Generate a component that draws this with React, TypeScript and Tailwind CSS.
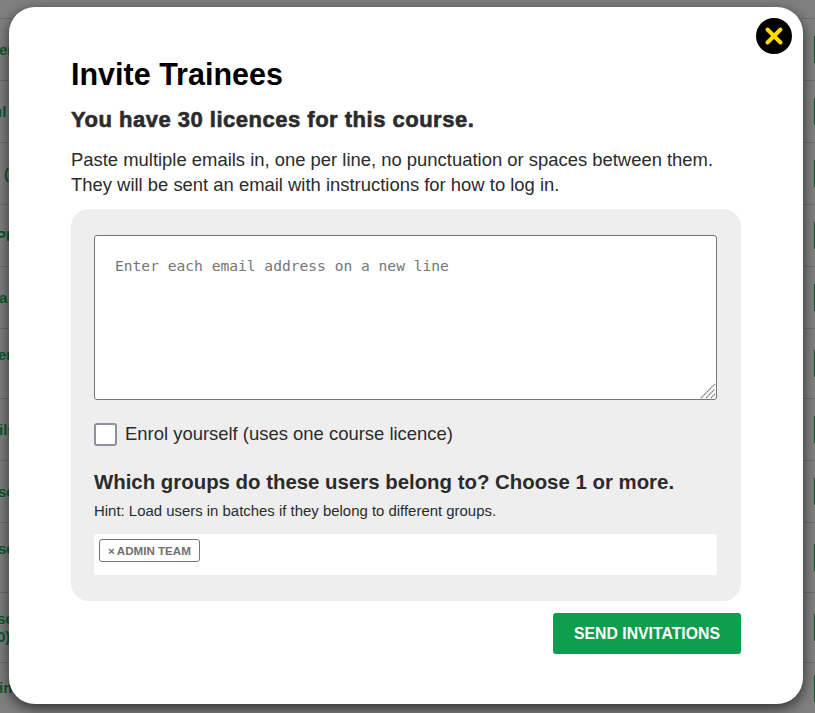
const rows = [
  { h: 62, t: ["er"], m: -1 }, { h: 62, t: ["ul"], m: -7 }, { h: 62, t: ["("], m: 4 }, { h: 62, t: ["PI"], m: -4 }, { h: 62, t: ["a"], m: -1 },
  { h: 70, t: ["en", "\u00a0"], m: -2 }, { h: 62, t: ["ils"], m: -1 }, { h: 62, t: ["se"], m: -2 }, { h: 70, t: ["se", "\u00a0"], m: -2 }, { h: 70, t: ["se", "0)"], m: -3 }, { h: 51, t: ["in"], m: -1 },
];

export default function App() {
  return (
    <div className="relative h-[713px] w-[815px] overflow-hidden bg-[#808080] font-['Liberation_Sans',Arial,sans-serif]">
      <div className="flex flex-col pt-[18px]">
        {rows.map((r, i) => (
          <div key={i} style={{ height: r.h }} className="flex items-center justify-between border-t border-[#6f6f6f]">
            <div style={{ marginLeft: r.m }} className="whitespace-nowrap text-[15px] font-bold leading-[18px] text-[#0a5a2a]">
              {r.t.map((l, j) => (
                <div key={j}>{l}</div>
              ))}
            </div>
            <span className="h-[27px] w-px bg-[#0a5a2a]" />
          </div>
        ))}
      </div>
      <div className="absolute left-[9px] top-[7px] flex h-[697px] w-[794px] flex-col rounded-[26px] bg-white px-[62px] pt-[49px] shadow-[0_4px_14px_rgba(0,0,0,0.65)]">
        <button className="absolute right-[11px] top-[11px] flex h-[36px] w-[36px] items-center justify-center rounded-full bg-black">
          <svg width="20" height="20" viewBox="0 0 20 20">
            <path d="M3.5 3.5 16.5 16.5M16.5 3.5 3.5 16.5" stroke="#ffdd00" strokeWidth="4" strokeLinecap="round" />
          </svg>
        </button>
        <h1 className="text-[30.5px] font-bold leading-[36px] text-black">Invite Trainees</h1>
        <h2 className="mt-[15px] text-[22px] font-bold leading-[26px] tracking-[0.5px] text-[#2b2b2b] [-webkit-text-stroke:0.6px_#2b2b2b]">You have 30 licences for this course.</h2>
        <p className="mt-[14px] text-[18.43px] leading-[25px] text-[#2b2b2b]">
          Paste multiple emails in, one per line, no punctuation or spaces between them.<br />
          They will be sent an email with instructions for how to log in.
        </p>
        <div className="mt-[12px] flex h-[392px] flex-col rounded-[18px] bg-[#eeeeee] pl-[23px] pr-[24px] pt-[26px]">
          <div className="relative h-[165px] w-full">
            <textarea
              readOnly
              placeholder="Enter each email address on a new line"
              className="block h-full w-full resize-none rounded-[3px] border border-[#767676] bg-white px-5 py-[21px] font-['DejaVu_Sans_Mono',monospace] text-[14.6px] leading-[18px] outline-none placeholder:text-[#757575]"
            />
            <svg className="absolute bottom-[1px] right-[1px]" width="16" height="16" viewBox="0 0 16 16">
              <path d="M1 15 15 1M6 15 15 6M11 15 15 11" stroke="#767676" strokeWidth="1.4" strokeDasharray="1.4 0.7" fill="none" />
            </svg>
          </div>
          <label className="mt-[22px] flex items-center gap-[8px] text-[18.45px] leading-[24px] text-[#2b2b2b]">
            <span className="h-[23px] w-[23px] rounded-[3px] border-2 border-[#8f8f9d] bg-white" />
            Enrol yourself (uses one course licence)
          </label>
          <h3 className="mt-[23px] text-[20.4px] font-bold leading-[26px] text-[#2b2b2b]">Which groups do these users belong to? Choose 1 or more.</h3>
          <p className="mt-[7px] text-[14.93px] leading-[18px] text-[#2b2b2b]">Hint: Load users in batches if they belong to different groups.</p>
          <div className="mt-[14px] flex h-[41px] items-start rounded-[3px] bg-white pl-[5px] pt-[5px]">
            <span className="flex h-[23px] items-center gap-[2px] rounded-[3px] border border-[#767676] px-2 text-[11.6px] font-bold text-[#707070]">
              <span>×</span>ADMIN TEAM
            </span>
          </div>
        </div>
        <div className="mt-[12px] flex justify-end">
          <button className="h-[41px] w-[188px] rounded-[3px] bg-[#0f9d4e] text-[15.8px] font-bold text-white">SEND INVITATIONS</button>
        </div>
      </div>
    </div>
  );
}
